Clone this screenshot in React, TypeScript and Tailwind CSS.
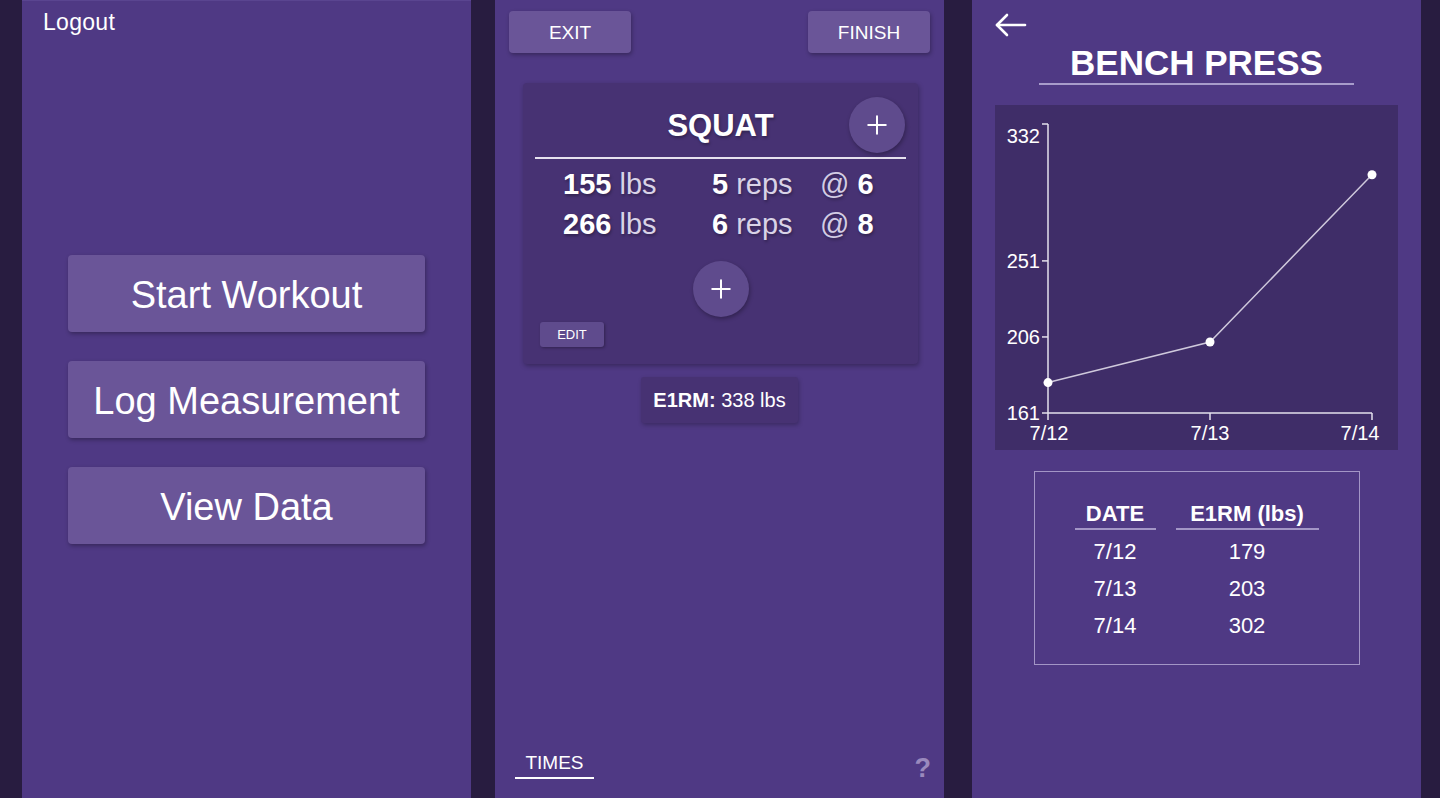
import { Plus } from "lucide-react";

const btnShadow = "shadow-[1px_2px_4px_rgba(0,0,0,0.3)]";

const sets = [
  { weight: 155, reps: 5, rpe: 6 },
  { weight: 266, reps: 6, rpe: 8 },
];

const history = [
  { date: "7/12", e1rm: 179 },
  { date: "7/13", e1rm: 203 },
  { date: "7/14", e1rm: 302 },
];

const HomePanel = () => (
  <div className="w-[449px] h-[798px] bg-[#4f3984] border-t border-[#5a4590] flex flex-col">
    <div className="pl-[21px] pt-[6px] text-[23px] leading-[30px] text-white tracking-[0.3px]">Logout</div>
    <div className="flex flex-col gap-[29px] px-[46px] pt-[218px]">
      {["Start Workout", "Log Measurement", "View Data"].map((label) => (
        <button
          key={label}
          className={`h-[77px] pt-[4px] rounded-[4px] bg-[#6a5598] text-white text-[38px] ${btnShadow}`}
        >
          {label}
        </button>
      ))}
    </div>
  </div>
);

const RoundPlus = () => (
  <div className="w-[56px] h-[56px] rounded-full bg-[#5f4b8d] flex items-center justify-center shadow-[1px_2px_4px_rgba(0,0,0,0.3)]">
    <Plus className="w-[30px] h-[30px] text-white" strokeWidth={1.6} />
  </div>
);

const WorkoutPanel = () => (
  <div className="w-[449px] h-[798px] bg-[#4f3984] flex flex-col">
    <div className="flex justify-between px-[14px] pt-[11px]">
      <button className={`w-[122px] h-[42px] pt-[3px] rounded-[4px] bg-[#6a5598] text-white text-[19px] ${btnShadow}`}>
        EXIT
      </button>
      <button className={`w-[122px] h-[42px] pt-[3px] rounded-[4px] bg-[#6a5598] text-white text-[19px] ${btnShadow}`}>
        FINISH
      </button>
    </div>

    {/* exercise card */}
    <div className="ml-[28px] mt-[30px] w-[395px] rounded-[4px] bg-[#473273] pt-[14px] pb-[17px] shadow-[1px_2px_5px_rgba(0,0,0,0.3)]">
      <div className="mx-[13px] grid grid-cols-[56px_1fr_56px] items-center h-[56px]">
        <div />
        <div className="pt-[2px] text-center text-white font-bold text-[31px] [text-shadow:1px_2px_3px_rgba(0,0,0,0.3)]">
          SQUAT
        </div>
        <RoundPlus />
      </div>
      <div className="mx-[12px] mt-[4px] border-t-2 border-[#e6e1ef]" />
      <div className="mt-[5px] pl-[40px] text-[29px] leading-[40px] text-white [text-shadow:1px_2px_3px_rgba(0,0,0,0.3)]">
        {sets.map((s, i) => (
          <div key={i} className="grid grid-cols-[149px_108px_auto]">
            <div>
              <span className="font-bold">{s.weight}</span>{" "}
              <span className="text-[#d9d3e7]">lbs</span>
            </div>
            <div>
              <span className="font-bold">{s.reps}</span>{" "}
              <span className="text-[#d9d3e7]">reps</span>
            </div>
            <div>
              <span className="text-[#d3cce4]">@</span> <span className="font-bold">{s.rpe}</span>
            </div>
          </div>
        ))}
      </div>
      <div className="mt-[17px] flex justify-center">
        <RoundPlus />
      </div>
      <button className="ml-[17px] mt-[5px] w-[64px] h-[25px] rounded-[3px] bg-[#5f4b8d] text-white text-[13px] shadow-[1px_1px_3px_rgba(0,0,0,0.3)]">
        EDIT
      </button>
    </div>

    <div className="mx-auto mt-[13px] w-[157px] h-[46px] rounded-[3px] bg-[#473273] flex items-center justify-center text-white text-[20px] shadow-[1px_2px_4px_rgba(0,0,0,0.25)]">
      <span className="font-bold">E1RM:</span>&nbsp;338 lbs
    </div>

    <div className="mt-auto flex items-end justify-between pl-[20px] pr-[13px] pb-[19px]">
      <div className="w-[79px] text-center text-white text-[19px] leading-[24px] border-b-2 border-white pb-[2px]">
        TIMES
      </div>
      <div className="text-[#9a89bd] font-bold text-[27px] leading-[28px] mb-[-3px]">?</div>
    </div>
  </div>
);

const Chart = () => {
  // chart box is 403 x 345, y scale 161..332 over 308..19
  const y = (v: number) => 308 - ((v - 161) * 289) / 171;
  const xs = [53, 215, 377];
  const labelX = [54, 215, 365];
  const pts = history.map((h, i) => `${xs[i]},${y(h.e1rm)}`).join(" ");
  return (
    <div className="mx-auto mt-[20px] w-[403px] h-[345px] bg-[#3f2d68]">
      <svg width="403" height="345" className="block">
        <g stroke="#e4e0ec" strokeWidth="1.5" fill="none">
          <line x1="53" y1="19" x2="53" y2="308" />
          <line x1="53" y1="308" x2="377" y2="308" />
          {[332, 251, 206, 161].map((v) => (
            <line key={v} x1="47" y1={y(v)} x2="53" y2={y(v)} />
          ))}
          {xs.map((x) => (
            <line key={x} x1={x} y1="308" x2={x} y2="315" />
          ))}
        </g>
        <polyline points={pts} fill="none" stroke="#cfc9dc" strokeWidth="1.5" />
        {history.map((h, i) => (
          <circle key={h.date} cx={xs[i]} cy={y(h.e1rm)} r="4.5" fill="#ffffff" />
        ))}
        <g fill="#ffffff" fontSize="20" fontFamily="'Liberation Sans', Arial, sans-serif">
          {[332, 251, 206, 161].map((v) => (
            <text key={v} x="45" y={v === 332 ? y(v) + 19 : y(v) + 7} textAnchor="end">
              {v}
            </text>
          ))}
          {history.map((h, i) => (
            <text key={h.date} x={labelX[i]} y="335" textAnchor="middle">
              {h.date}
            </text>
          ))}
        </g>
      </svg>
    </div>
  );
};

const DataPanel = () => (
  <div className="w-[449px] h-[798px] bg-[#4f3984] flex flex-col">
    <div className="pl-[23px] pt-[13px]">
      <svg width="32" height="24" viewBox="0 0 32 24" fill="none" stroke="#ffffff" strokeWidth="2.6" strokeLinecap="round" strokeLinejoin="round">
        <path d="M2 12H30" />
        <path d="M12 2L2 12L12 22" />
      </svg>
    </div>
    <div className="mx-auto mt-[6px] w-[315px] border-b-2 border-[#a89ccb] text-center text-white font-bold text-[35px] leading-[40px]">
      BENCH PRESS
    </div>
    <Chart />
    <div className="mx-auto mt-[21px] w-[326px] h-[194px] border-[1.5px] border-[#a396c6] pt-[27px] pl-[40px] flex text-white text-[22px]">
      <div className="w-[81px] text-center">
        <div className="h-[31px] leading-[30px] font-bold border-b-2 border-[#a396c6]">DATE</div>
        <div className="mt-[3px] leading-[37px]">
          {history.map((h) => (
            <div key={h.date}>{h.date}</div>
          ))}
        </div>
      </div>
      <div className="ml-[20px] w-[143px] text-center">
        <div className="h-[31px] leading-[30px] font-bold border-b-2 border-[#a396c6]">E1RM (lbs)</div>
        <div className="mt-[3px] leading-[37px]">
          {history.map((h) => (
            <div key={h.date}>{h.e1rm}</div>
          ))}
        </div>
      </div>
    </div>
  </div>
);

export default function App() {
  return (
    <div className="w-[1440px] h-[798px] overflow-hidden bg-[#281c40] flex font-['Liberation_Sans',Arial,sans-serif]">
      <div className="ml-[22px]">
        <HomePanel />
      </div>
      <div className="ml-[24px]">
        <WorkoutPanel />
      </div>
      <div className="ml-[28px]">
        <DataPanel />
      </div>
    </div>
  );
}
